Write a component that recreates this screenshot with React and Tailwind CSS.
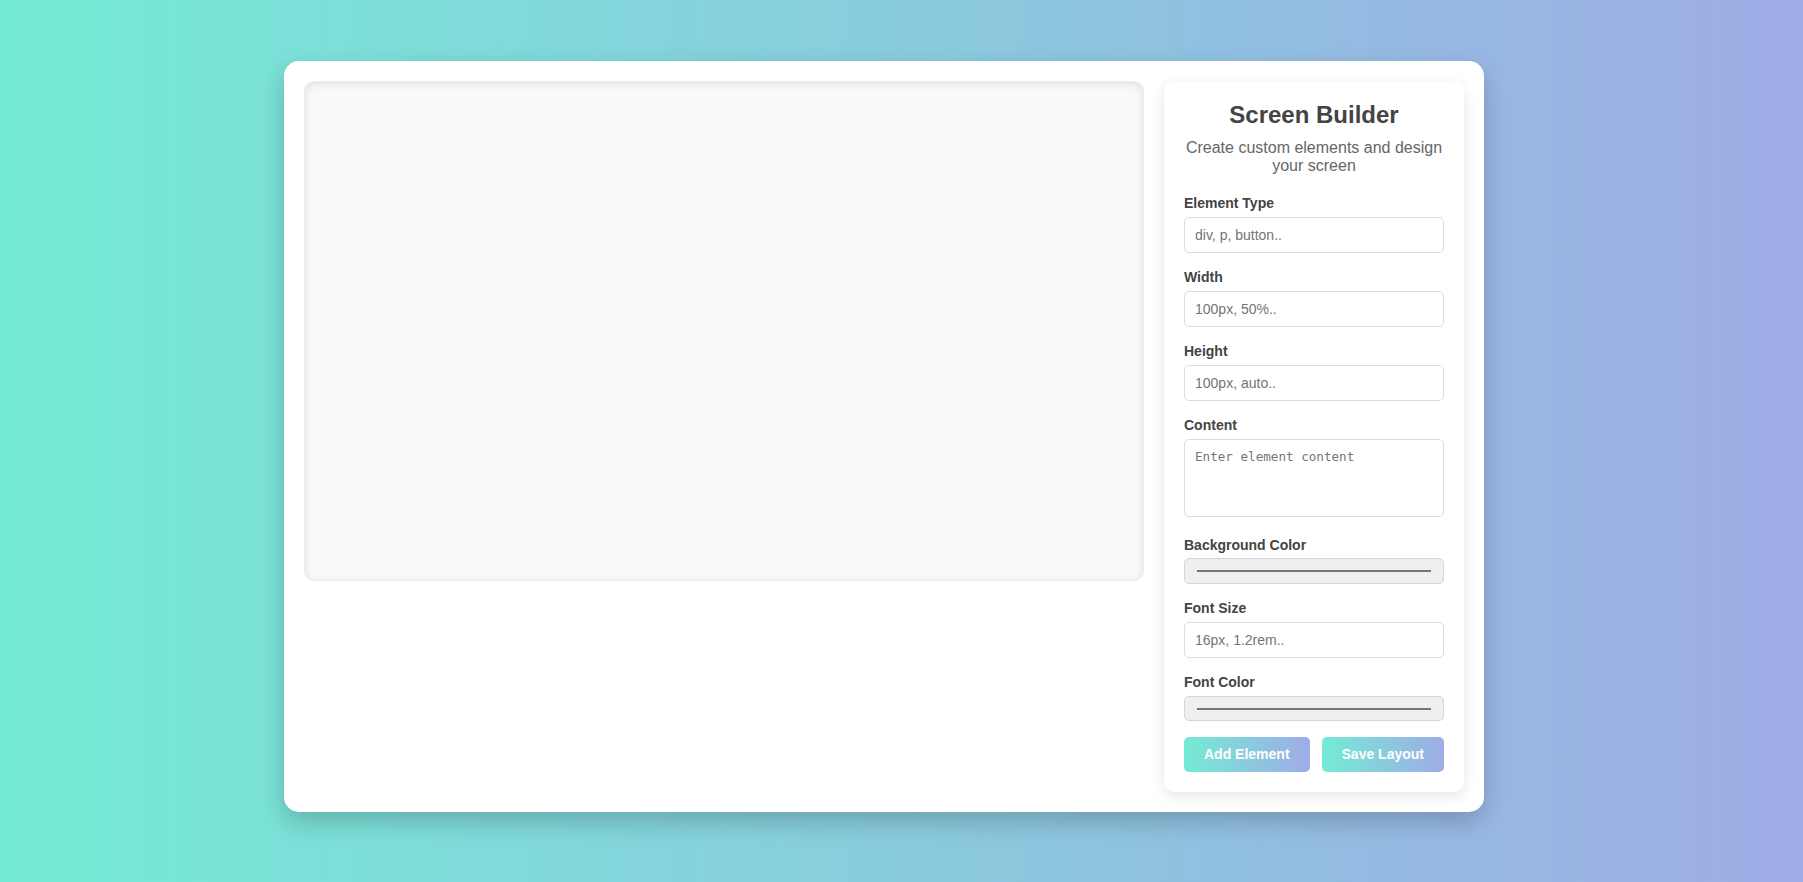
export default function App() {
  const field = "block w-full h-[36px] rounded-[5px] border border-[#dddddd] bg-white px-[10px] text-[14px] text-[#333] placeholder:text-[#757575] outline-none";
  const label = "block text-[14px] leading-[16px] font-bold text-[#444] mb-[6px]";
  return (
    <div className="min-h-screen w-full bg-[linear-gradient(to_right,#74ebd5,#9face6)] pt-[61px] pb-[69px]" style={{ fontFamily: '"Liberation Sans", Arial, sans-serif' }}>
      <div className="ml-[284px] w-[1200px] bg-white rounded-[15px] p-[20px] flex gap-[20px] items-start shadow-[0_10px_25px_rgba(0,0,0,0.2)]">
        <div className="flex-1 h-[500px] rounded-[10px] bg-[#f9f9f9] border border-[#ececec] shadow-[inset_0_2px_8px_rgba(0,0,0,0.1)]"></div>
        <div className="w-[300px] rounded-[10px] bg-white p-[20px] shadow-[0_4px_14px_rgba(0,0,0,0.1)]">
          <h2 className="text-center text-[24px] leading-[28px] font-bold text-[#444] mb-[10px]">Screen Builder</h2>
          <p className="text-center text-[16px] leading-[18px] text-[#666] mb-[20px]">Create custom elements and design your screen</p>

          <label className={label}>Element Type</label>
          <input className={field + " mb-[16px]"} placeholder="div, p, button.." />

          <label className={label}>Width</label>
          <input className={field + " mb-[16px]"} placeholder="100px, 50%.." />

          <label className={label}>Height</label>
          <input className={field + " mb-[16px]"} placeholder="100px, auto.." />

          <label className={label}>Content</label>
          <textarea className="block w-full h-[78px] rounded-[5px] border border-[#dddddd] bg-white px-[10px] pt-[9px] text-[12.6px] leading-[15px] text-[#333] placeholder:text-[#757575] outline-none resize-none mb-[20px]" style={{ fontFamily: '"DejaVu Sans Mono", "Liberation Mono", monospace' }} placeholder="Enter element content"></textarea>

          <label className={label + " !mb-[5px]"}>Background Color</label>
          <div className="h-[26px] w-full rounded-[5px] border border-[#d6d6d6] bg-[#efefef] flex items-center px-[12px] mb-[16px]">
            <div className="h-[2px] w-full bg-[#777]"></div>
          </div>

          <label className={label}>Font Size</label>
          <input className={field + " mb-[16px]"} placeholder="16px, 1.2rem.." />

          <label className={label}>Font Color</label>
          <div className="h-[25px] w-full rounded-[5px] border border-[#d6d6d6] bg-[#efefef] flex items-center px-[12px] mb-[16px]">
            <div className="h-[2px] w-full bg-[#777]"></div>
          </div>

          <div className="flex gap-[12px]">
            <button className="flex-auto h-[35px] rounded-[5px] bg-[linear-gradient(to_right,#74ebd5,#9face6)] text-white text-[14px] font-bold">Add Element</button>
            <button className="flex-auto h-[35px] rounded-[5px] bg-[linear-gradient(to_right,#74ebd5,#9face6)] text-white text-[14px] font-bold">Save Layout</button>
          </div>
        </div>
      </div>
    </div>
  );
}
